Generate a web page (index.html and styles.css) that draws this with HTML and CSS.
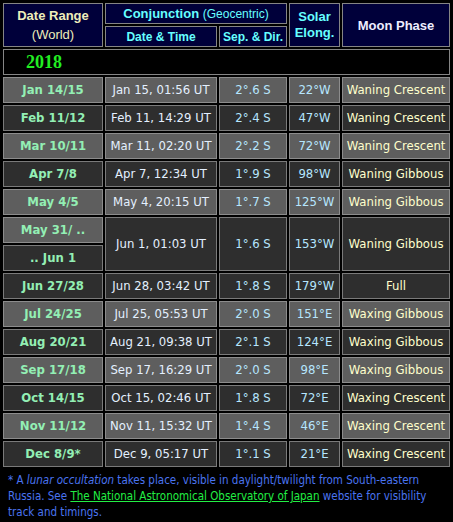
FILE: index.html
```html
<!DOCTYPE html>
<html>
<head>
<meta charset="utf-8">
<link rel="stylesheet" href="styles.css">
</head>
<body>
<table class="moon">
  <colgroup>
    <col class="c1"><col class="c2"><col class="c3"><col class="c4"><col class="c5">
  </colgroup>
  <tr class="h1">
    <th rowspan="2" class="hd-range"><b>Date Range</b><br><span>(World)</span></th>
    <th colspan="2" class="hd-conj"><b>Conjunction</b> <span>(Geocentric)</span></th>
    <th rowspan="2" class="hd-elong">Solar<br>Elong.</th>
    <th rowspan="2" class="hd-phase">Moon Phase</th>
  </tr>
  <tr class="h2">
    <th class="hd-sub">Date &amp; Time</th>
    <th class="hd-sub">Sep. &amp; Dir.</th>
  </tr>
  <tr class="year"><td colspan="5">2018</td></tr>
  <tr class="lt"><td class="rng">Jan 14/15</td><td class="dt">Jan 15, 01:56 UT</td><td class="sep">2°.6 S</td><td class="el">22°W</td><td class="ph">Waning Crescent</td></tr>
  <tr class="dk"><td class="rng">Feb 11/12</td><td class="dt">Feb 11, 14:29 UT</td><td class="sep">2°.4 S</td><td class="el">47°W</td><td class="ph">Waning Crescent</td></tr>
  <tr class="lt"><td class="rng">Mar 10/11</td><td class="dt">Mar 11, 02:20 UT</td><td class="sep">2°.2 S</td><td class="el">72°W</td><td class="ph">Waning Crescent</td></tr>
  <tr class="dk"><td class="rng">Apr 7/8</td><td class="dt">Apr 7, 12:34 UT</td><td class="sep">1°.9 S</td><td class="el">98°W</td><td class="ph">Waning Gibbous</td></tr>
  <tr class="lt"><td class="rng">May 4/5</td><td class="dt">May 4, 20:15 UT</td><td class="sep">1°.7 S</td><td class="el">125°W</td><td class="ph">Waning Gibbous</td></tr>
  <tr class="dk"><td class="rng light">May 31/ ..</td><td rowspan="2" class="dt">Jun 1, 01:03 UT</td><td rowspan="2" class="sep">1°.6 S</td><td rowspan="2" class="el">153°W</td><td rowspan="2" class="ph">Waning Gibbous</td></tr>
  <tr class="dk"><td class="rng">.. Jun 1</td></tr>
  <tr class="dk"><td class="rng">Jun 27/28</td><td class="dt">Jun 28, 03:42 UT</td><td class="sep">1°.8 S</td><td class="el">179°W</td><td class="ph">Full</td></tr>
  <tr class="lt"><td class="rng">Jul 24/25</td><td class="dt">Jul 25, 05:53 UT</td><td class="sep">2°.0 S</td><td class="el">151°E</td><td class="ph">Waxing Gibbous</td></tr>
  <tr class="dk"><td class="rng">Aug 20/21</td><td class="dt">Aug 21, 09:38 UT</td><td class="sep">2°.1 S</td><td class="el">124°E</td><td class="ph">Waxing Gibbous</td></tr>
  <tr class="lt"><td class="rng">Sep 17/18</td><td class="dt">Sep 17, 16:29 UT</td><td class="sep">2°.0 S</td><td class="el">98°E</td><td class="ph">Waxing Gibbous</td></tr>
  <tr class="dk"><td class="rng">Oct 14/15</td><td class="dt">Oct 15, 02:46 UT</td><td class="sep">1°.8 S</td><td class="el">72°E</td><td class="ph">Waxing Crescent</td></tr>
  <tr class="lt"><td class="rng">Nov 11/12</td><td class="dt">Nov 11, 15:32 UT</td><td class="sep">1°.4 S</td><td class="el">46°E</td><td class="ph">Waxing Crescent</td></tr>
  <tr class="dk"><td class="rng">Dec 8/9*</td><td class="dt">Dec 9, 05:17 UT</td><td class="sep">1°.1 S</td><td class="el">21°E</td><td class="ph">Waxing Crescent</td></tr>
</table>
<p class="note">* A <i>lunar occultation</i> takes place, visible in daylight/twilight from South-eastern Russia. See <a href="#">The National Astronomical Observatory of Japan</a> website for visibility track and timings.</p>
</body>
</html>
```
FILE: styles.css
```css
html, body {
  margin: 0;
  padding: 0;
  background: #000;
}
body {
  font-family: "DejaVu Sans", Verdana, sans-serif;
  font-size: 12px;
}
.moon {
  margin: 1px;
  width: 451px;
  table-layout: fixed;
  border-collapse: separate;
  border-spacing: 2px;
}
.c1 { width: 100px; }
.c2 { width: 112px; }
.c3 { width: 68px; }
.c4 { width: 51px; }
.c5 { width: 108px; }
.moon th, .moon td {
  border: 1px solid #858585;
  padding: 0;
  text-align: center;
  vertical-align: middle;
  white-space: nowrap;
  overflow: hidden;
}
.moon th {
  background: #00003a;
  font-family: "Liberation Sans", Arial, sans-serif;
  font-size: 13px;
}
.h1 th { height: 19px; }
.h2 th { height: 19px; }
.hd-range {
  color: #eeeebb;
  line-height: 19px;
}
.hd-range span { font-weight: normal; }
.hd-conj {
  color: #66ffff;
}
.hd-conj span {
  font-weight: normal;
  font-size: 12px;
}
.moon .hd-sub {
  color: #66ffff;
  font-size: 12px;
}
.hd-elong {
  color: #66ffff;
  line-height: 16px;
}
.hd-phase {
  color: #eeeeff;
}
.moon td {
  height: 24px;
  font-size: 11.7px;
}
.moon .year td {
  background: #000;
  height: 24px;
  text-align: left;
  padding-left: 22px;
  font-family: "Liberation Serif", "Times New Roman", serif;
  font-weight: bold;
  font-size: 18px;
  color: #22ee22;
}
.lt td { background: #5e5e5e; border-color: #8c8c8c; }
.dk td { background: #2e2e2e; border-color: #7a7a7a; }
.dk td.light { background: #5e5e5e; border-color: #8c8c8c; }
.rng {
  font-weight: bold;
  color: #93efb4;
}
.dt { color: #e4f0ff; }
.sep { color: #b6e6ff; }
.el { color: #b6e6ff; }
.ph { color: #ffffcc; }
.note {
  margin: 3px 0 0 0;
  padding: 0 8px;
  font-family: "DejaVu Sans Condensed", "DejaVu Sans", sans-serif;
  font-stretch: condensed;
  font-size: 11.5px;
  color: #4a74f0;
  line-height: 16px;
}
.note a {
  color: #22ee44;
  text-decoration: underline;
}
```
